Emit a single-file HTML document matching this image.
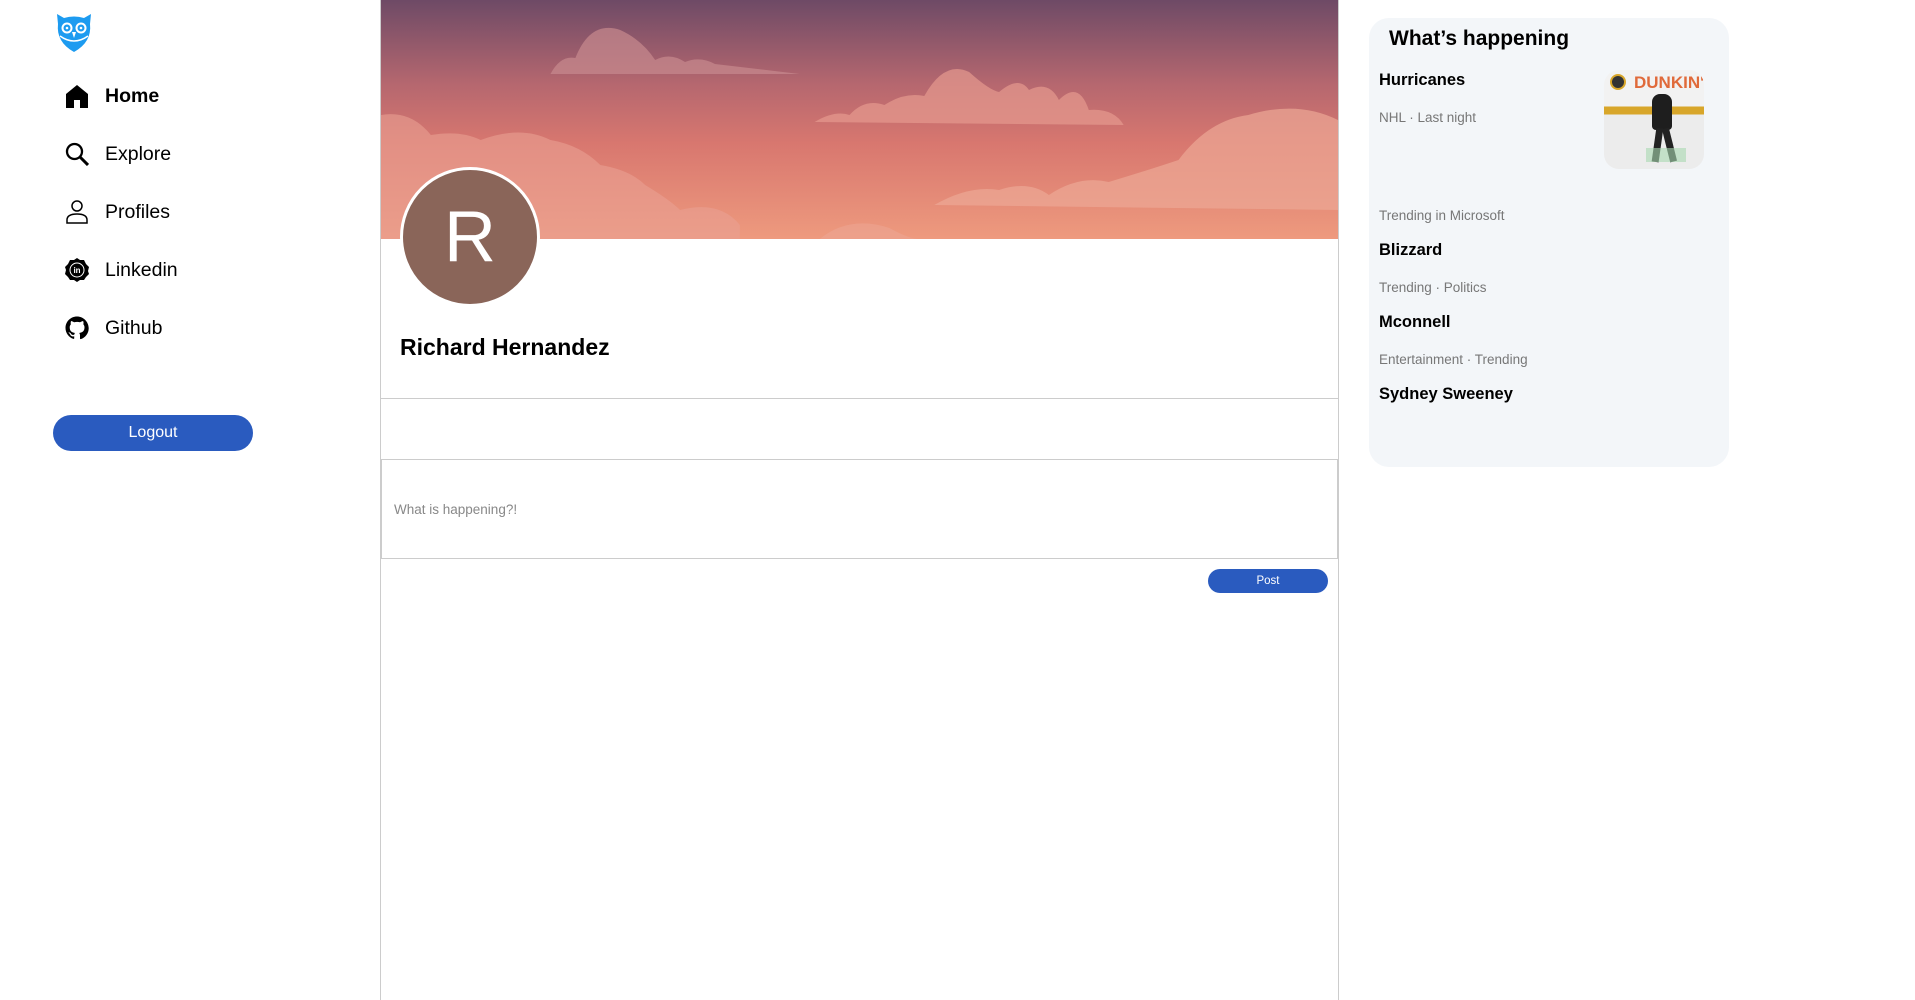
<!DOCTYPE html>
<html><head><meta charset="utf-8"><style>
*{margin:0;padding:0;box-sizing:border-box}
body{width:1915px;height:998px;background:#fff;font-family:"Liberation Sans",sans-serif;position:relative;overflow:hidden;color:#000}
.abs{position:absolute}
.nav{position:absolute;left:65px;display:flex;align-items:center;font-size:19.5px}
.nav svg{width:24px;height:24px;margin-right:16px}
.g{color:#777;font-size:13.5px;position:absolute;left:1379px}
.b{font-weight:bold;font-size:16.5px;position:absolute;left:1379px}
</style></head><body>
<svg class="abs" style="left:56px;top:14px" width="36" height="38" viewBox="0 0 36 38">
<path d="M1 0 L8 4 Q18 1 28 4 L35 0 L34 10 Q36 28 18 38 Q0 28 2 10 Z" fill="#1d9bf0"/>
<circle cx="11" cy="14" r="5.5" fill="#fff"/><circle cx="25" cy="14" r="5.5" fill="#fff"/>
<circle cx="11" cy="14" r="3.5" fill="#1d9bf0"/><circle cx="25" cy="14" r="3.5" fill="#1d9bf0"/>
<circle cx="11" cy="14" r="1.3" fill="#fff"/><circle cx="25" cy="14" r="1.3" fill="#fff"/>
<path d="M16 18 L18 24 L20 18 Z" fill="#fff"/>
<path d="M4 22 Q18 32 32 22" stroke="#fff" stroke-width="1.5" fill="none"/>
</svg>
<div class="nav" style="top:84px;font-weight:bold"><svg viewBox="0 0 24 24"><path d="M12 1 L1 10 V24 H9 V16 H15 V24 H23 V10 Z" fill="#000"/></svg>Home</div>
<div class="nav" style="top:142px"><svg viewBox="0 0 24 24"><circle cx="9.5" cy="9.5" r="7.5" stroke="#000" stroke-width="2.3" fill="none"/><path d="M15 15 L23 23" stroke="#000" stroke-width="3"/></svg>Explore</div>
<div class="nav" style="top:200px"><svg viewBox="0 0 24 24"><circle cx="12" cy="6" r="5" stroke="#000" stroke-width="1.5" fill="none"/><path d="M2 23 V20 Q2 14 12 14 Q22 14 22 20 V23 Z" stroke="#000" stroke-width="1.5" fill="none"/></svg>Profiles</div>
<div class="nav" style="top:258px"><svg viewBox="0 0 24 24"><path d="M12 0 L15 2 L19 2 L21 6 L24 9 L23 13 L24 16 L21 19 L19 22 L15 22 L12 24 L9 22 L5 22 L3 19 L0 16 L1 12 L0 9 L3 6 L5 2 L9 2 Z" fill="#000"/><circle cx="12" cy="12" r="7" stroke="#fff" stroke-width="1" fill="none"/><text x="12" y="15" font-size="8" font-weight="bold" fill="#fff" text-anchor="middle" font-family="Liberation Sans">in</text></svg>Linkedin</div>
<div class="nav" style="top:316px"><svg viewBox="0 0 24 24"><path d="M12 0.5C5.6 0.5 0.5 5.6 0.5 12c0 5.1 3.3 9.4 7.9 10.9.6.1.8-.2.8-.6v-2c-3.2.7-3.900-1.5-3.900-1.5-.5-1.3-1.300-1.700-1.300-1.700-1-.7.1-.7.1-.7 1.200.1 1.800 1.200 1.800 1.200 1 1.800 2.700 1.300 3.400 1 .1-.8.4-1.300.7-1.600-2.600-.3-5.300-1.300-5.300-5.700 0-1.300.5-2.300 1.200-3.100-.1-.3-.5-1.500.1-3.100 0 0 1-.3 3.200 1.200a11 11 0 0 1 5.800 0c2.200-1.500 3.200-1.200 3.200-1.200.6 1.600.2 2.800.1 3.100.7.8 1.200 1.800 1.200 3.100 0 4.400-2.700 5.400-5.300 5.700.4.4.8 1.100.8 2.200v3.300c0 .3.2.7.8.6 4.600-1.500 7.900-5.800 7.900-10.900C23.500 5.600 18.400.5 12 .5z" fill="#000"/></svg>Github</div>
<div class="abs" style="left:53px;top:415px;width:200px;height:36px;border-radius:18px;background:#2a5bbf;color:#fff;font-size:16px;text-align:center;line-height:36px">Logout</div>

<div class="abs" style="left:380px;top:0;width:959px;height:1000px;border-left:1px solid #ccc;border-right:1px solid #ccc"></div>
<svg class="abs" style="left:381px;top:0" width="957" height="239" viewBox="0 0 960 239" preserveAspectRatio="none">
<defs><linearGradient id="sk" x1="0" y1="0" x2="0" y2="1"><stop offset="0" stop-color="#6e4a66"/><stop offset="0.35" stop-color="#b5676f"/><stop offset="0.6" stop-color="#d8776f"/><stop offset="1" stop-color="#ee9a7e"/></linearGradient></defs>
<rect width="960" height="239" fill="url(#sk)"/>
<path d="M170 74 Q180 55 195 58 Q210 20 240 30 Q262 40 275 60 Q290 52 305 62 Q320 56 335 64 L420 74 Z" fill="#c88a8e" opacity="0.7"/>
<path d="M435 122 Q455 110 470 115 Q485 98 505 105 Q525 92 545 96 Q565 60 590 72 Q610 90 620 92 Q640 75 650 90 Q670 80 680 100 Q700 80 710 110 Q735 108 745 125 Z" fill="#e59a8f" opacity="0.7"/>
<path d="M0 115 Q30 110 50 135 Q80 130 100 140 Q140 125 170 140 Q200 145 220 165 Q250 170 265 185 Q290 200 300 210 Q340 200 360 225 L360 239 L0 239 Z" fill="#eaa092" opacity="0.6"/>
<path d="M555 205 Q590 185 620 190 Q650 180 670 195 Q700 175 730 182 Q770 170 800 160 Q830 120 870 115 Q920 100 960 120 L960 210 Z" fill="#eca896" opacity="0.7"/>
<path d="M440 239 Q470 215 510 228 Q530 239 540 239 Z" fill="#eda593" opacity="0.6"/>
</svg>
<div class="abs" style="left:400px;top:167px;width:140px;height:140px;border-radius:50%;background:#8a6559;border:3px solid #fff;color:#fff;font-size:72px;text-align:center;line-height:134px">R</div>
<div class="abs" style="left:400px;top:334px;font-size:23px;font-weight:bold">Richard Hernandez</div>
<div class="abs" style="left:381px;top:398px;width:957px;border-top:1px solid #ccc"></div>
<div class="abs" style="left:381px;top:459px;width:957px;height:100px;border:1px solid #ccc"></div>
<div class="abs" style="left:394px;top:502px;font-size:13.5px;color:#888">What is happening?!</div>
<div class="abs" style="left:1208px;top:569px;width:120px;height:24px;border-radius:12px;background:#2a5bbf;color:#fff;font-size:11.5px;text-align:center;line-height:24px">Post</div>

<div class="abs" style="left:1369px;top:18px;width:360px;height:449px;border-radius:20px;background:#f3f6f9"></div>
<div class="abs" style="left:1389px;top:27px;font-size:21px;font-weight:bold">What’s happening</div>
<div class="b" style="top:71px">Hurricanes</div>
<div class="g" style="top:110px">NHL · Last night</div>
<div class="abs" style="left:1604px;top:70px;width:100px;height:99px;border-radius:15px;overflow:hidden;background:linear-gradient(#f2f2f2 0,#f2f2f2 37%,#d8a62a 37%,#d8a62a 45%,#ececec 45%)">
<div class="abs" style="left:30px;top:3px;color:#e06a3a;font-weight:bold;font-size:17px;font-family:'Liberation Sans Narrow','Liberation Sans',sans-serif">DUNKIN'</div>
<div class="abs" style="left:6px;top:4px;width:16px;height:16px;border-radius:50%;background:#333;border:2px solid #d8a62a"></div>
<div class="abs" style="left:48px;top:24px;width:20px;height:36px;background:#1e1e1e;border-radius:8px 8px 4px 4px"></div>
<div class="abs" style="left:50px;top:58px;width:7px;height:34px;background:#222;transform:rotate(8deg)"></div>
<div class="abs" style="left:62px;top:58px;width:7px;height:34px;background:#222;transform:rotate(-14deg)"></div>
<div class="abs" style="left:42px;top:78px;width:40px;height:14px;background:#a8d8b0;opacity:.6"></div>
</div>
<div class="g" style="top:208px">Trending in Microsoft</div>
<div class="b" style="top:241px">Blizzard</div>
<div class="g" style="top:280px">Trending · Politics</div>
<div class="b" style="top:313px">Mconnell</div>
<div class="g" style="top:352px">Entertainment · Trending</div>
<div class="b" style="top:385px">Sydney Sweeney</div>
</body></html>
